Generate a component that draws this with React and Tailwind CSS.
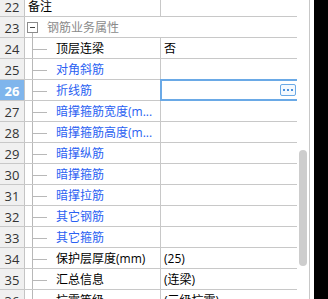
import React from 'react';

const rows = [
    { n: 22, name: '备注', value: '', kind: 'plain' },
    { n: 23, name: '钢筋业务属性', kind: 'group' },
    { n: 24, name: '顶层连梁', value: '否', kind: 'child' },
    { n: 25, name: '对角斜筋', value: '', kind: 'child', blue: true },
    { n: 26, name: '折线筋', value: '', kind: 'child', blue: true, selected: true },
    { n: 27, name: '暗撑箍筋宽度(m...', value: '', kind: 'child', blue: true },
    { n: 28, name: '暗撑箍筋高度(m...', value: '', kind: 'child', blue: true },
    { n: 29, name: '暗撑纵筋', value: '', kind: 'child', blue: true },
    { n: 30, name: '暗撑箍筋', value: '', kind: 'child', blue: true },
    { n: 31, name: '暗撑拉筋', value: '', kind: 'child', blue: true },
    { n: 32, name: '其它钢筋', value: '', kind: 'child', blue: true },
    { n: 33, name: '其它箍筋', value: '', kind: 'child', blue: true },
    { n: 34, name: '保护层厚度(mm)', value: '(25)', kind: 'child' },
    { n: 35, name: '汇总信息', value: '(连梁)', kind: 'child' },
    { n: 36, name: '抗震等级', value: '(三级抗震)', kind: 'child' },
];

function NumCell({ n, selected }) {
    return (
        <div
            className={`w-[25px] shrink-0 flex items-center justify-center border-r border-[#c4c4c4] ${
                selected ? 'bg-[#7fb5ec] text-white font-bold' : 'bg-[#f0f0f0] text-[#333333]'
            }`}
        >
            <span className="text-[13px] pt-px">{n}</span>
        </div>
    );
}

function Row({ row }) {
    if (row.kind === 'group') {
        return (
            <div className="flex h-[21px] border-b border-[#c8c8c8]">
                <NumCell n={row.n} />
                <div className="relative flex-1 flex items-center">
                    <div className="ml-[2px] w-[11px] h-[11px] border border-[#8c8c8c] bg-white flex items-center justify-center">
                        <div className="w-[5px] h-px bg-[#444444]" />
                    </div>
                    <span className="ml-[9px] text-[#8a8a8a] pt-px">{row.name}</span>
                    {/* tree line going down from the box */}
                    <div className="absolute left-[7px] top-[16px] bottom-[-1px] w-px bg-[#b8b8b8]" />
                </div>
            </div>
        );
    }

    return (
        <div className="relative flex h-[21px] border-b border-[#c8c8c8]">
            <NumCell n={row.n} selected={row.selected} />
            <div className="w-[136px] shrink-0 flex items-center border-r border-[#c8c8c8] overflow-hidden whitespace-nowrap">
                {row.kind === 'child' ? (
                    <>
                        <div className="relative ml-[7px] w-[15px] self-stretch shrink-0">
                            <div className="absolute left-0 top-[-1px] bottom-[-1px] w-px bg-[#b8b8b8]" />
                            <div className="absolute left-0 right-0 top-[11px] h-px bg-[#b8b8b8]" />
                        </div>
                        <span className={`ml-[9px] pt-px ${row.blue ? 'text-[#2a5ff2]' : 'text-black'}`}>
                            {row.name}
                        </span>
                    </>
                ) : (
                    <span className="ml-[3px] pt-px text-black">{row.name}</span>
                )}
            </div>
            <div className="flex-1 flex items-center pl-[3px] text-black whitespace-nowrap">
                <span className="pt-px">{row.value}</span>
            </div>
            {row.selected && (
                <div className="absolute left-[160px] right-0 top-[-1px] bottom-[-1px] z-10 border-l-2 border-t-2 border-b-2 border-[#6aa9e6] flex items-center justify-end">
                    <div className="w-[16px] h-[12px] mr-px rounded-[2px] border border-[#6aa9e6] bg-[#f4f9fe] flex items-center justify-center gap-[2px]">
                        <div className="w-[2px] h-[2px] bg-[#4a90dc]" />
                        <div className="w-[2px] h-[2px] bg-[#4a90dc]" />
                        <div className="w-[2px] h-[2px] bg-[#4a90dc]" />
                    </div>
                </div>
            )}
        </div>
    );
}

export default function App() {
    return (
        <div
            className="flex w-[328px] h-[299px] overflow-hidden bg-white text-[12px] leading-[20px]"
            style={{ fontFamily: '"Open Sans", "Noto Sans CJK SC", sans-serif' }}
        >
            {/* Property grid */}
            <div className="w-[297px] shrink-0 overflow-hidden">
                <div className="-mt-[4px]">
                    {rows.map((row) => (
                        <Row key={row.n} row={row} />
                    ))}
                </div>
            </div>

            {/* Scrollbar */}
            <div className="w-[13px] shrink-0 border-r border-[#c8c8c8] pt-[150px] pl-[2px]">
                <div className="w-[8px] h-[116px] rounded-full bg-[#cdcdcd]" />
            </div>
            <div className="w-[4px] shrink-0 bg-white" />
            <div className="flex-1 bg-black" />
        </div>
    );
}
